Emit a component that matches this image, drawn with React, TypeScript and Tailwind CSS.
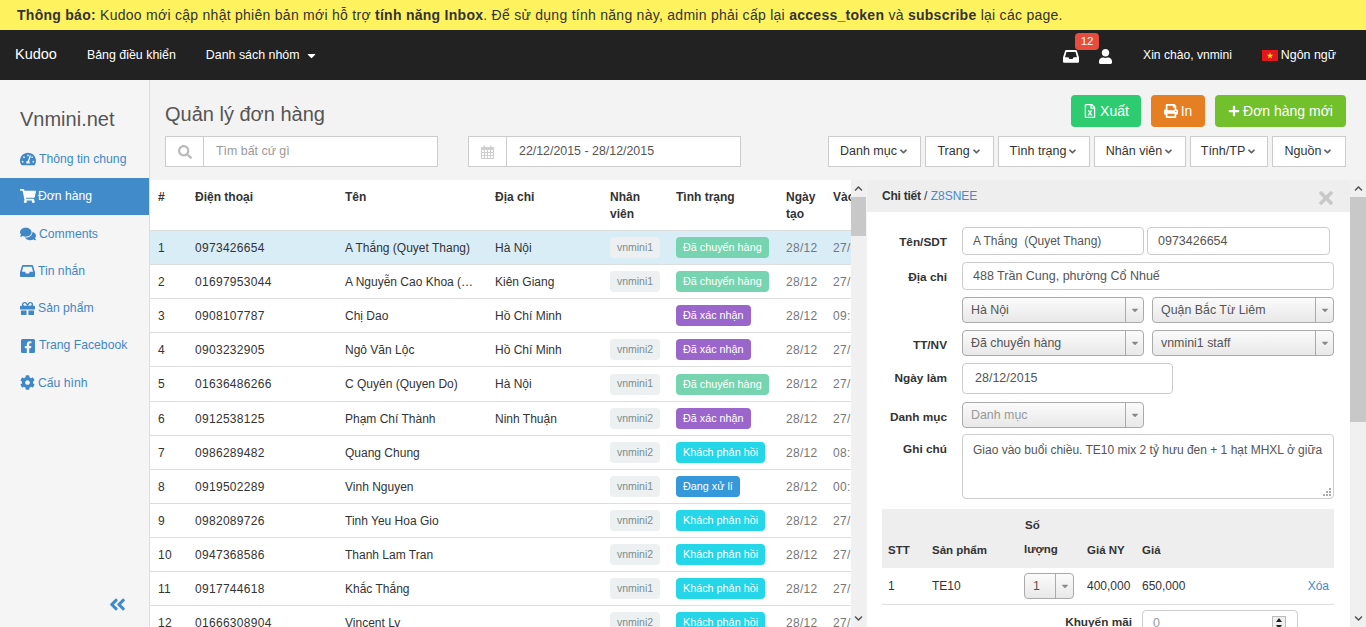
import {
  FaAngleDoubleLeft,
  FaAngleDown,
  FaCaretDown,
  FaChevronDown,
  FaChevronUp,
  FaCog,
  FaComments,
  FaFacebookSquare,
  FaGift,
  FaPlus,
  FaPrint,
  FaRegFileExcel,
  FaSearch,
  FaShoppingCart,
  FaTachometerAlt,
  FaTimes,
  FaUser,
} from "react-icons/fa";

function InboxIcon({ className }: { className?: string }) {
  return (
    <svg viewBox="0 0 20 16" fill="currentColor" fillRule="evenodd" width="1em" height="0.8em" className={className}>
      <path d="M4 0H16a1.5 1.5 0 0 1 1.4 1L20 9.5V14.5a1.5 1.5 0 0 1-1.5 1.5H1.5A1.5 1.5 0 0 1 0 14.5V9.5L2.6 1A1.5 1.5 0 0 1 4 0ZM4.4 2.4 2.5 9H6.7L8 11.4H12L13.3 9H17.5L15.6 2.4Z" />
    </svg>
  );
}

function CalendarIcon() {
  return (
    <svg viewBox="0 0 13 14" className="w-[13px] h-[14px]" fill="#cfcfcf">
      <path
        fillRule="evenodd"
        d="M0 2H2.5V0.5H4V2H9V0.5H10.5V2H13V14H0ZM1 5V7H3V5ZM4 5V7H6V5ZM7 5V7H9V5ZM10 5V7H12V5ZM1 8V10H3V8ZM4 8V10H6V8ZM7 8V10H9V8ZM10 8V10H12V8ZM1 11V13H3V11ZM4 11V13H6V11ZM7 11V13H9V11ZM10 11V13H12V11Z"
      />
    </svg>
  );
}

const menu = [
  { icon: FaTachometerAlt, label: "Thông tin chung", size: "text-[16px]", gap: "gap-[3px]" },
  { icon: FaShoppingCart, label: "Đơn hàng", size: "text-[16px]", gap: "gap-[2px]", active: true },
  { icon: FaComments, label: "Comments", size: "text-[16px]", gap: "gap-[3px]" },
  { icon: InboxIcon, label: "Tin nhắn", size: "text-[15px]", gap: "gap-[3px]" },
  { icon: FaGift, label: "Sản phẩm", size: "text-[15px]", gap: "gap-[3px]" },
  { icon: FaFacebookSquare, label: "Trang Facebook", size: "text-[16px]", gap: "gap-[3px]" },
  { icon: FaCog, label: "Cấu hình", size: "text-[15px]", gap: "gap-[3px]" },
];

const statusColors: Record<string, string> = {
  "Đã chuyển hàng": "bg-[#76d5b0]",
  "Đã xác nhận": "bg-[#9b66cb]",
  "Khách phản hồi": "bg-[#25d5e8]",
  "Đang xử lí": "bg-[#3498db]",
};

const orders = [
  ["1", "0973426654", "A Thắng (Quyet Thang)", "Hà Nội", "vnmini1", "Đã chuyển hàng", "27/12"],
  ["2", "01697953044", "A Nguyễn Cao Khoa (…", "Kiên Giang", "vnmini1", "Đã chuyển hàng", "27/12"],
  ["3", "0908107787", "Chị Dao", "Hồ Chí Minh", "", "Đã xác nhận", "09:12"],
  ["4", "0903232905", "Ngô Văn Lộc", "Hồ Chí Minh", "vnmini2", "Đã xác nhận", "27/12"],
  ["5", "01636486266", "C Quyên (Quyen Do)", "Hà Nội", "vnmini1", "Đã chuyển hàng", "27/12"],
  ["6", "0912538125", "Phạm Chí Thành", "Ninh Thuận", "vnmini2", "Đã xác nhận", "27/12"],
  ["7", "0986289482", "Quang Chung", "", "vnmini2", "Khách phản hồi", "08:30"],
  ["8", "0919502289", "Vinh Nguyen", "", "vnmini1", "Đang xử lí", "00:15"],
  ["9", "0982089726", "Tinh Yeu Hoa Gio", "", "vnmini2", "Khách phản hồi", "27/12"],
  ["10", "0947368586", "Thanh Lam Tran", "", "vnmini2", "Khách phản hồi", "27/12"],
  ["11", "0917744618", "Khắc Thắng", "", "vnmini1", "Khách phản hồi", "27/12"],
  ["12", "01666308904", "Vincent Ly", "", "vnmini2", "Khách phản hồi", "27/12"],
];

const filters = [
  { label: "Danh mục", width: "w-[93px]" },
  { label: "Trang", width: "w-[69px]" },
  { label: "Tình trạng", width: "w-[92px]" },
  { label: "Nhân viên", width: "w-[92px]" },
  { label: "Tính/TP", width: "w-[78px]" },
  { label: "Nguồn", width: "w-[74px]" },
];

function Flag({ className }: { className: string }) {
  return (
    <svg viewBox="0 0 16 11" className={className}>
      <rect width="16" height="11" fill="#e2161c" />
      <polygon points="8,2.2 8.8,4.7 11.2,4.7 9.3,6.2 10,8.6 8,7.1 6,8.6 6.7,6.2 4.8,4.7 7.2,4.7" fill="#ffe800" />
    </svg>
  );
}

function Scrollbar({ thumb, className }: { thumb: string; className: string }) {
  return (
    <div className={`flex flex-col shrink-0 bg-[#f0f0f0] ${className}`}>
      <div className="h-[17px] flex items-center justify-center text-[#505050] text-[9px]">
        <FaChevronUp />
      </div>
      <div className={`bg-[#c8c8c8] ${thumb}`} />
      <div className="flex-1" />
      <div className="h-[17px] flex items-center justify-center text-[#505050] text-[9px]">
        <FaChevronDown />
      </div>
    </div>
  );
}

function InputAddon({ icon, text, muted, width }: { icon: React.ReactNode; text: string; muted?: boolean; width: string }) {
  return (
    <div className={`flex h-[31px] bg-white border border-[#ccc] ${width}`}>
      <div className="w-[38px] flex items-center justify-center border-r border-[#ccc] text-[#bbb] text-[14px]">{icon}</div>
      <div className={`pl-[12px] flex items-center text-[12.4px] ${muted ? "text-[#999]" : "text-[#555]"}`}>{text}</div>
    </div>
  );
}

function FakeSelect({ value, className, muted }: { value: string; className: string; muted?: boolean }) {
  return (
    <div className={`flex h-[26px] rounded-[4px] border border-[#aaa] bg-linear-to-b from-[#fbfbfb] to-[#e8e8e8] ${className}`}>
      <div className={`flex-1 pl-[8px] pt-[1px] flex items-center text-[12.4px] whitespace-nowrap ${muted ? "text-[#999]" : "text-[#555]"}`}>{value}</div>
      <div className="w-[18px] border-l border-[#aaa] flex items-center justify-center text-[#888] text-[10px]">
        <FaCaretDown />
      </div>
    </div>
  );
}

function TextBox({ value, className }: { value: string; className: string }) {
  return (
    <div className={`flex items-center bg-white rounded-[4px] border border-[#ccc] pl-[10px] text-[#555] whitespace-pre ${className}`}>
      {value}
    </div>
  );
}

function FormRow({ label, children, className }: { label?: string; children: React.ReactNode; className?: string }) {
  return (
    <div className={`flex gap-[15px] ${className ?? ""}`}>
      <div className="w-[65px] pt-[7px] text-right font-bold text-[11.8px] text-[#333] whitespace-nowrap">{label}</div>
      {children}
    </div>
  );
}

export default function App() {
  return (
    <div className="h-[627px] w-[1366px] overflow-hidden flex flex-col bg-[#f3f3f3] font-['Liberation_Sans',Arial,sans-serif]">
      <div className="h-[30px] shrink-0 bg-[#fff25f] pl-[17px] flex items-center text-[14px] tracking-[0.27px] text-[#333] whitespace-nowrap">
        <span>
          <b>Thông báo:</b> Kudoo mới cập nhật phiên bản mới hỗ trợ <b>tính năng Inbox</b>. Để sử dụng tính năng này, admin phải cấp lại <b>access_token</b> và <b>subscribe</b> lại các page.
        </span>
      </div>

      <nav className="h-[50px] shrink-0 bg-[#222] flex items-center text-white text-[12.4px] whitespace-nowrap">
        <span className="ml-[15px] text-[14.5px]">Kudoo</span>
        <span className="ml-[30px]">Bảng điều khiển</span>
        <span className="ml-[30px]">Danh sách nhóm</span>
        <FaCaretDown className="ml-[5px] text-[13px]" />
        <div className="ml-auto relative mr-[30px] flex items-center gap-[19px] pt-[3px]">
          <InboxIcon className="text-[16px]" />
          <FaUser className="text-[15px]" />
          <span className="absolute left-[12px] top-[-13px] w-[24px] h-[17px] rounded-[4px] bg-[#e74c3c] flex items-center justify-center text-[11.5px]">12</span>
        </div>
        <span className="text-[12.1px]">Xin chào, vnmini</span>
        <Flag className="ml-[30px] w-[16px] h-[11px]" />
        <span className="ml-[3px] mr-[30px]">Ngôn ngữ</span>
      </nav>

      <div className="flex-1 flex min-h-0">
        <aside className="w-[150px] shrink-0 bg-[#f5f5f5] border-r border-[#ddd] flex flex-col">
          <div className="pl-[20px] pt-[26px] h-[60.5px] text-[20px] leading-[26px] text-[#555]">Vnmini.net</div>
          {menu.map((m) => (
            <div
              key={m.label}
              className={`h-[37.3px] pl-[20px] flex items-center text-[12.2px] whitespace-nowrap ${m.gap} ${m.active ? "bg-[#428bca] text-white" : "text-[#3f87c7]"}`}
            >
              <m.icon className={m.size} />
              <span>{m.label}</span>
            </div>
          ))}
          <div className="mt-auto mb-[13px] pr-[22px] flex justify-end text-[#428bca] text-[19px]">
            <FaAngleDoubleLeft />
          </div>
        </aside>

        <main className="flex-1 min-w-0 flex flex-col">
          <header className="h-[100px] shrink-0 pl-[15px] pr-[20px] flex flex-col">
            <div className="flex items-start pt-[15px] h-[56px]">
              <h1 className="text-[20px] leading-[38px] text-[#555]">Quản lý đơn hàng</h1>
              <div className="ml-auto flex gap-[10px] text-white text-[14px]">
                <button className="w-[70px] h-[32px] rounded-[4px] bg-[#2ecc71] flex items-center justify-center gap-[3px]">
                  <FaRegFileExcel className="text-[14px]" />
                  Xuất
                </button>
                <button className="w-[54px] h-[32px] rounded-[4px] bg-[#e67e22] flex items-center justify-center gap-[3px]">
                  <FaPrint className="text-[14px]" />
                  In
                </button>
                <button className="w-[131px] h-[32px] rounded-[4px] bg-[#72c02c] flex items-center justify-center gap-[3px]">
                  <FaPlus className="text-[12px]" />
                  Đơn hàng mới
                </button>
              </div>
            </div>
            <div className="flex">
              <InputAddon icon={<FaSearch />} text="Tìm bất cứ gì" muted width="w-[273px]" />
              <div className="ml-[30px]">
                <InputAddon icon={<CalendarIcon />} text="22/12/2015 - 28/12/2015" width="w-[273px]" />
              </div>
              <div className="ml-auto flex gap-[4px]">
                {filters.map((f) => (
                  <div
                    key={f.label}
                    className={`h-[31px] bg-white border border-[#ccc] flex items-center justify-center gap-[1px] text-[12.5px] text-[#333] ${f.width}`}
                  >
                    {f.label}
                    <FaAngleDown className="text-[#666] text-[11px]" />
                  </div>
                ))}
              </div>
            </div>
          </header>

          <div className="flex-1 min-h-0 flex">
            <div className="w-[701px] shrink-0 bg-white overflow-hidden">
              <table className="table-fixed w-[760px] border-collapse text-[12px] text-[#333]">
                <colgroup>
                  <col className="w-[37px]" />
                  <col className="w-[150px]" />
                  <col className="w-[150px]" />
                  <col className="w-[115px]" />
                  <col className="w-[66px]" />
                  <col className="w-[110px]" />
                  <col className="w-[47px]" />
                  <col className="w-[85px]" />
                </colgroup>
                <thead>
                  <tr className="h-[50.5px] border-b border-[#ddd] text-left align-top">
                    <th className="px-[8px] pt-[9px] leading-[17px]">#</th>
                    <th className="px-[8px] pt-[9px] leading-[17px]">Điện thoại</th>
                    <th className="px-[8px] pt-[9px] leading-[17px]">Tên</th>
                    <th className="px-[8px] pt-[9px] leading-[17px]">Địa chỉ</th>
                    <th className="px-[8px] pt-[9px] leading-[17px]">Nhân viên</th>
                    <th className="px-[8px] pt-[9px] leading-[17px]">Tình trạng</th>
                    <th className="px-[8px] pt-[9px] leading-[17px]">Ngày tạo</th>
                    <th className="px-[8px] pt-[9px] leading-[17px]">Vào lúc</th>
                  </tr>
                </thead>
                <tbody>
                  {orders.map((o, i) => (
                    <tr key={o[0]} className={`border-b border-[#ddd] ${i === 4 ? "h-[35px]" : "h-[34px]"} ${i === 0 ? "bg-[#d9edf7]" : ""}`}>
                      <td className="px-[8px] tracking-[0.3px]">{o[0]}</td>
                      <td className="px-[8px] tracking-[0.3px]">{o[1]}</td>
                      <td className="px-[8px] whitespace-nowrap">{o[2]}</td>
                      <td className="px-[8px]">{o[3]}</td>
                      <td className="px-[8px]">
                        {o[4] && (
                          <span className="inline-flex items-center justify-center w-[50px] h-[21px] rounded-[4px] bg-[#ecf0f1] text-[#7f8c8d] text-[10.5px]">
                            {o[4]}
                          </span>
                        )}
                      </td>
                      <td className="px-[8px]">
                        <span className={`inline-flex items-center h-[21px] px-[7px] rounded-[4px] text-white text-[10.8px] whitespace-nowrap ${statusColors[o[5]]}`}>
                          {o[5]}
                        </span>
                      </td>
                      <td className="px-[8px] text-[#777] tracking-[0.3px]">28/12</td>
                      <td className="px-[8px] text-[#777] tracking-[0.3px] whitespace-nowrap">{o[6]}</td>
                    </tr>
                  ))}
                </tbody>
              </table>
            </div>
            <Scrollbar className="w-[15px]" thumb="h-[39px]" />

            <section className="w-[483px] shrink-0 ml-[1px] bg-white overflow-hidden">
              <div className="h-[32px] bg-[#eee] pl-[15px] pr-[15px] flex items-center justify-between text-[12px]">
                <span className="text-[#333]">
                  <b className="tracking-[-0.25px]">Chi tiết</b> / <span className="text-[#428bca]">Z8SNEE</span>
                </span>
                <FaTimes className="text-[#c8c8c8] text-[20px] mt-[3px] mr-[-1px]" />
              </div>
              <div className="pl-[15px] pr-[15px] pt-[15px] flex flex-col">
                <FormRow label="Tên/SDT">
                  <div className="flex gap-[3px]">
                    <TextBox value={"A Thắng  (Quyet Thang)"} className="w-[182px] h-[28px] text-[12px]" />
                    <TextBox value="0973426654" className="w-[183px] h-[28px] text-[12.5px]" />
                  </div>
                </FormRow>
                <FormRow label="Địa chỉ" className="mt-[7px]">
                  <TextBox value="488 Trần Cung, phường Cổ Nhuế" className="w-[372px] h-[28px] text-[12.5px]" />
                </FormRow>
                <FormRow className="mt-[7px]">
                  <div className="flex gap-[8px]">
                    <FakeSelect value="Hà Nội" className="w-[182px]" />
                    <FakeSelect value="Quận Bắc Từ Liêm" className="w-[182px]" />
                  </div>
                </FormRow>
                <FormRow label="TT/NV" className="mt-[7px]">
                  <div className="flex gap-[8px]">
                    <FakeSelect value="Đã chuyển hàng" className="w-[182px]" />
                    <FakeSelect value="vnmini1 staff" className="w-[182px]" />
                  </div>
                </FormRow>
                <FormRow label="Ngày làm" className="mt-[7px]">
                  <TextBox value="28/12/2015" className="w-[211px] h-[31px] text-[12.5px] pl-[12px]" />
                </FormRow>
                <FormRow label="Danh mục" className="mt-[8px]">
                  <FakeSelect value="Danh mục" muted className="w-[182px]" />
                </FormRow>
                <FormRow label="Ghi chú" className="mt-[6px]">
                  <div className="relative w-[372px] h-[65px] bg-white rounded-[4px] border border-[#ccc] pl-[10px] pt-[6px] text-[12px] text-[#555] whitespace-nowrap">
                    Giao vào buổi chiều. TE10 mix 2 tỷ hưu đen + 1 hạt MHXL ở giữa
                    <svg viewBox="0 0 9 9" className="absolute right-[1px] bottom-[1px] w-[9px] h-[9px]" fill="#aaa">
                      <rect x="6" y="0" width="2" height="2" />
                      <rect x="3" y="3" width="2" height="2" />
                      <rect x="6" y="3" width="2" height="2" />
                      <rect x="0" y="6" width="2" height="2" />
                      <rect x="3" y="6" width="2" height="2" />
                      <rect x="6" y="6" width="2" height="2" />
                    </svg>
                  </div>
                </FormRow>

                <table className="table-fixed w-[452px] mt-[10px] border-collapse text-[12px] text-[#333]">
                  <colgroup>
                    <col className="w-[50px]" />
                    <col className="w-[92px]" />
                    <col className="w-[63px]" />
                    <col className="w-[55px]" />
                    <col className="w-[120px]" />
                    <col />
                  </colgroup>
                  <thead>
                    <tr className="h-[59px] bg-[#eee] text-left align-bottom text-[11.5px]">
                      <th className="pl-[6px] pb-[9px]">STT</th>
                      <th className="pb-[9px]">Sản phẩm</th>
                      <th className="pb-[7px] leading-[24px]">
                        <span className="block pl-[1px]">Số</span>lượng
                      </th>
                      <th className="pb-[9px]">Giá NY</th>
                      <th className="pb-[9px]">Giá</th>
                      <th />
                    </tr>
                  </thead>
                  <tbody>
                    <tr className="h-[36px] border-b border-[#ddd]">
                      <td className="pl-[6px]">1</td>
                      <td>TE10</td>
                      <td>
                        <FakeSelect value="1" className="w-[50px]" />
                      </td>
                      <td>400,000</td>
                      <td>650,000</td>
                      <td className="pr-[5px] text-right text-[#428bca]">Xóa</td>
                    </tr>
                  </tbody>
                </table>
                <div className="flex mt-[5px] pl-[180px] items-start">
                  <div className="w-[70px] text-right font-bold text-[11.8px] text-[#333] pt-[4px] whitespace-nowrap">Khuyến mãi</div>
                  <div className="relative ml-[10px] w-[156px] h-[28px] bg-white rounded-[4px] border border-[#ccc] pl-[10px] flex items-center text-[12.5px] text-[#999]">
                    0
                    <div className="absolute right-[11px] top-[5px] w-[14px] h-[16px] border border-[#bbb] bg-[#f0f0f0] flex flex-col items-center justify-around">
                      <span className="w-0 h-0 border-x-[3px] border-x-transparent border-b-[4px] border-b-[#222]" />
                      <span className="w-0 h-0 border-x-[3px] border-x-transparent border-t-[4px] border-t-[#222]" />
                    </div>
                  </div>
                </div>
              </div>
            </section>
            <Scrollbar className="w-[16px]" thumb="h-[225px]" />
          </div>
        </main>
      </div>
    </div>
  );
}
